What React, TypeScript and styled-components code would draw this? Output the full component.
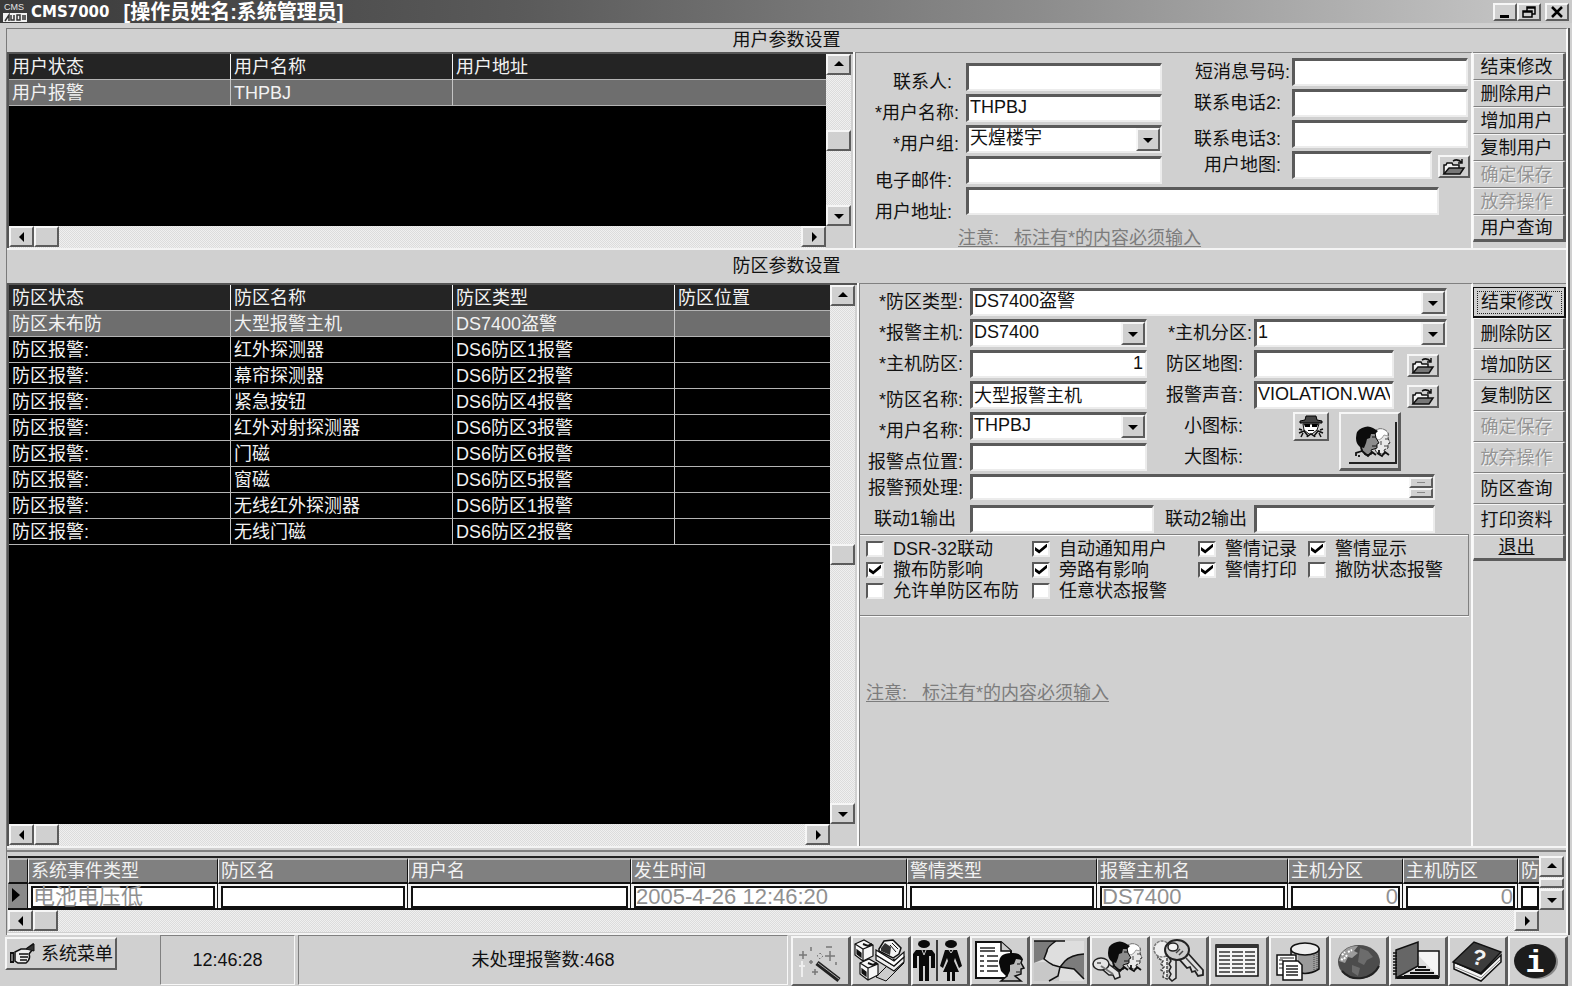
import React from 'react';
import styled, { createGlobalStyle, css } from 'styled-components';

const Global = createGlobalStyle`
  * { box-sizing: border-box; }
  body {
    margin: 0;
    background: #d0d0d0;
    color: #111;
    font: 18px/20px "Liberation Sans", "Noto Sans CJK SC", sans-serif;
  }
  button, input, select, textarea { font: inherit; color: inherit; margin: 0; border-radius: 0; }
`;

const raised = css`
  background: #d0d0d0;
  border: solid;
  border-width: 2px;
  border-color: #f6f6f6 #5c5c5c #5c5c5c #f6f6f6;
`;

const sunken = css`
  background: #fff;
  border: solid;
  border-width: 3px 2px 2px 3px;
  border-color: #5a5a5a #ececec #ececec #5a5a5a;
`;

/* ---------- window frame ---------- */

const Window = styled.div`
  min-height: 100vh;
  display: flex;
  flex-direction: column;
`;

const TitleBar = styled.header`
  height: 23px;
  flex: none;
  display: flex;
  align-items: center;
  padding: 0 3px;
  background: linear-gradient(90deg, #3a3a3a, #5a5a5a 33%, #8c8c8c 66%, #cacaca);
  color: #fff;
`;

const Title = styled.h1`
  flex: 1;
  margin: 0 0 0 4px;
  display: flex;
  align-items: center;
  gap: 14px;
  font: bold 15px/22px "DejaVu Sans", "Noto Sans CJK SC", sans-serif;
  white-space: nowrap;
`;

const Operator = styled.span`
  font-size: 20px;
  font-family: "Liberation Sans", "Noto Sans CJK SC", sans-serif;
`;

const WindowButton = styled.button<{ $apart?: boolean }>`
  ${raised}
  width: 24px;
  height: 18px;
  padding: 0;
  display: flex;
  align-items: center;
  justify-content: center;
  margin-left: ${p => (p.$apart ? 4 : 0)}px;
`;

const Frame = styled.main`
  flex: 1;
  display: flex;
  flex-direction: column;
  margin: 5px 4px 0 6px;
  border: solid #7a7a7a;
  border-width: 1px 0 0 1px;
  border-right: 2px solid #fafafa;
  box-shadow: 2px 0 0 #555;
`;

const Section = styled.section<{ $fill?: boolean }>`
  display: flex;
  flex-direction: column;
  flex: ${p => (p.$fill ? '1 1 auto' : 'none')};
  border-bottom: 2px solid #f4f4f4;
`;

const SectionTitle = styled.h2<{ $tall?: boolean }>`
  margin: 0;
  font-size: 18px;
  font-weight: normal;
  text-align: center;
  line-height: ${p => (p.$tall ? 33 : 23)}px;
`;

const Columns = styled.div<{ $form: number }>`
  flex: 1;
  display: grid;
  grid-template-columns: minmax(0, 1fr) ${p => p.$form}px 93px;
`;

/* ---------- lists with scroll bars ---------- */

const ListPanel = styled.div`
  display: grid;
  grid-template: minmax(0, 1fr) 22px / minmax(0, 1fr) 25px;
  padding-right: 4px;
  border-top: 2px solid #555;
  border-left: 2px solid #555;
`;

const ListBody = styled.div`
  background: #000;
  overflow: hidden;
`;

const ListTable = styled.table`
  width: 100%;
  table-layout: fixed;
  border-collapse: separate;
  border-spacing: 0;
  color: #f2f2f2;
  th, td {
    height: 26px;
    padding: 0 0 0 3px;
    text-align: left;
    font-weight: normal;
    white-space: nowrap;
    line-height: 24px;
    border-bottom: 1px solid #b4b4b4;
    border-right: 1px solid #c4c4c4;
  }
  th { background: #242424; border-right-color: #f4f4f4; }
  th:last-child, td:last-child { border-right: 0; }
`;

const ListRow = styled.tr<{ $selected?: boolean }>`
  background: ${p => (p.$selected ? '#6e6e6e' : '#000')};
`;

const Track = styled.div<{ $vertical?: boolean }>`
  display: flex;
  flex-direction: ${p => (p.$vertical ? 'column' : 'row')};
  background: conic-gradient(#dcdcdc 25%, #f0f0f0 0 50%, #dcdcdc 0 75%, #f0f0f0 0) 0 0 / 2px 2px;
`;

const ScrollButton = styled.button`
  ${raised}
  width: 25px;
  height: 21px;
  padding: 0;
  flex: none;
  display: flex;
  align-items: center;
  justify-content: center;
`;

const Thumb = styled.div<{ $thin?: boolean }>`
  ${raised}
  width: 25px;
  height: ${p => (p.$thin ? 10 : 21)}px;
  flex: none;
`;

const Space = styled.span`
  flex: 1 0 0;
`;

const arrows = {
  up: '1,6 11,6 6,1',
  down: '1,3 11,3 6,8',
  left: '8,0 8,10 3,5',
  right: '4,0 4,10 9,5',
};

const Arrow = ({ dir }: { dir: keyof typeof arrows }) => (
  <svg width="12" height="10" viewBox="0 0 12 10" aria-hidden="true">
    <polygon points={arrows[dir]} fill="#000" />
  </svg>
);

const VScroll = ({ thin }: { thin?: boolean }) => (
  <Track $vertical>
    <ScrollButton aria-label="上"><Arrow dir="up" /></ScrollButton>
    <Space />
    <Thumb $thin={thin} />
    <Space />
    <ScrollButton aria-label="下"><Arrow dir="down" /></ScrollButton>
  </Track>
);

const HScroll = () => (
  <Track>
    <ScrollButton aria-label="左"><Arrow dir="left" /></ScrollButton>
    <Thumb />
    <Space />
    <ScrollButton aria-label="右"><Arrow dir="right" /></ScrollButton>
  </Track>
);

const ListCol = styled.col`
  width: 222px;
  &:last-child { width: auto; }
`;

function List({ heads, rows }: { heads: string[]; rows: string[][] }) {
  return (
    <ListPanel>
      <ListBody>
        <ListTable>
          <colgroup>{heads.map(h => <ListCol key={h} />)}</colgroup>
          <thead><tr>{heads.map(h => <th key={h}>{h}</th>)}</tr></thead>
          <tbody>
            {rows.map((r, i) => (
              <ListRow key={i} $selected={i === 0}>{r.map((c, j) => <td key={j}>{c}</td>)}</ListRow>
            ))}
          </tbody>
        </ListTable>
      </ListBody>
      <VScroll />
      <HScroll />
    </ListPanel>
  );
}

/* ---------- forms ---------- */

const FormPanel = styled.form<{ $top: number }>`
  display: flex;
  flex-direction: column;
  padding-top: ${p => p.$top}px;
  border-top: 1px solid #808080;
  border-left: 1px solid #808080;
  border-right: 2px solid #fafafa;
  box-shadow: -2px 0 0 #fafafa;
`;

const UserColumns = styled.div`
  display: flex;
  align-items: flex-start;
  height: 124px;
`;

const FieldGrid = styled.div<{ $label: number }>`
  display: grid;
  grid-template-columns: ${p => p.$label}px auto;
  row-gap: 3px;
`;

const UserRight = styled(FieldGrid)`
  margin-top: -5px;
`;

const ZoneGrid = styled.div`
  display: grid;
  grid-template-columns: 110px 184px 100px 140px 1fr;
  row-gap: 3px;
  padding-bottom: 1px;
`;

const drops = { none: 0, low: 10, lower: 22 };
const insets = { tight: 2, near: 7, mid: 11, far: 14 };

const Label = styled.label<{ $drop?: keyof typeof drops; $inset?: keyof typeof insets }>`
  height: 28px;
  display: flex;
  align-items: center;
  justify-content: flex-end;
  white-space: nowrap;
  padding-top: ${p => drops[p.$drop ?? 'none']}px;
  padding-right: ${p => insets[p.$inset ?? 'near']}px;
`;

const TextBox = styled.input<{ $w: number; $right?: boolean; $span?: number }>`
  ${sunken}
  width: ${p => p.$w}px;
  height: 28px;
  padding: 0 2px 3px 1px;
  outline: none;
  text-align: ${p => (p.$right ? 'right' : 'left')};
  grid-column: span ${p => p.$span ?? 1};
`;

const ComboFrame = styled.span<{ $w: number; $span?: number }>`
  ${sunken}
  width: ${p => p.$w}px;
  height: 28px;
  display: flex;
  grid-column: span ${p => p.$span ?? 1};
`;

const ComboSelect = styled.select`
  appearance: none;
  flex: 1;
  min-width: 0;
  border: 0;
  background: transparent;
  padding: 0 0 3px 1px;
  outline: none;
`;

const ComboArrow = styled.span`
  ${raised}
  width: 24px;
  display: flex;
  align-items: center;
  justify-content: center;
  pointer-events: none;
`;

const Combo = ({ id, w, value, span }: { id: string; w: number; value: string; span?: number }) => (
  <ComboFrame $w={w} $span={span}>
    <ComboSelect id={id}><option>{value}</option></ComboSelect>
    <ComboArrow><Arrow dir="down" /></ComboArrow>
  </ComboFrame>
);

const BrowseRow = styled.span`
  display: flex;
  gap: 6px;
`;

const BrowseButton = styled.button`
  ${raised}
  width: 32px;
  height: 23px;
  padding: 0;
  margin-top: 4px;
  display: flex;
  align-items: center;
  justify-content: center;
`;

const BrowseCell = styled.span`
  padding-left: 13px;
`;

const IconCell = styled.span`
  grid-column: span 2;
  grid-row: span 2;
  display: flex;
  align-items: flex-start;
  gap: 10px;
  padding-left: 39px;
`;

const SmallIconButton = styled.button`
  ${raised}
  width: 36px;
  height: 29px;
  padding: 0;
`;

const LargeIconButton = styled.button`
  ${raised}
  border-right-width: 3px;
  border-bottom-width: 3px;
  width: 62px;
  height: 59px;
  padding: 0;
`;

const MemoFrame = styled.span`
  ${sunken}
  grid-column: span 4;
  width: 465px;
  height: 26px;
  display: flex;
`;

const Memo = styled.textarea`
  flex: 1;
  border: 0;
  padding: 0;
  resize: none;
  outline: none;
  overflow: hidden;
  background: transparent;
`;

const Spinner = styled.span`
  width: 24px;
  display: grid;
  grid-template-rows: 1fr 1fr;
`;

const SpinButton = styled.button`
  ${raised}
  min-height: 0;
  padding: 0;
  &::before { content: ''; display: block; height: 1px; margin: 0 6px; background: #888; }
`;

const Note = styled.p<{ $user?: boolean }>`
  margin: ${p => (p.$user ? '13px 0 0 102px' : '67px 0 0 6px')};
  color: #7c7c7c;
  text-decoration: underline;
  text-underline-offset: 2px;
  white-space: pre;
`;

const OptionBox = styled.fieldset`
  display: grid;
  grid-template-columns: 166px 166px 110px 1fr;
  grid-auto-rows: 21px;
  height: 82px;
  margin: 0 2px 0 0;
  padding: 3px 0 0 6px;
  min-width: 0;
  border: solid #808080;
  border-width: 1px 1px 1px 0;
  box-shadow: 0 1px 0 #fafafa, inset 0 1px 0 #fafafa;
`;

const CheckLabel = styled.label`
  display: flex;
  align-items: center;
  gap: 9px;
  white-space: nowrap;
`;

const Check = styled.input`
  ${sunken}
  border-width: 2px;
  appearance: none;
  width: 18px;
  height: 16px;
  flex: none;
  &:checked::before {
    content: '';
    display: block;
    width: 12px;
    height: 10px;
    margin: 1px;
    background: #000;
    clip-path: polygon(0 35%, 35% 65%, 100% 0, 100% 35%, 35% 100%, 0 70%);
  }
`;

/* ---------- side buttons ---------- */

const Side = styled.div<{ $top: number }>`
  display: flex;
  flex-direction: column;
  padding-top: ${p => p.$top}px;
  border-top: 1px solid #808080;
`;

const SideButton = styled.button<{ $h: number; $focus?: boolean; $underline?: boolean }>`
  ${raised}
  border-width: 1px 3px 1px 1px;
  border-bottom-color: #808080;
  height: ${p => p.$h}px;
  padding: 0 4px 0 0;
  white-space: nowrap;
  text-decoration: ${p => (p.$underline ? 'underline' : 'none')};
  &:disabled { color: #949494; text-shadow: 1px 1px 0 #f4f4f4; }
  &:last-child { border-bottom: 3px solid #5c5c5c; }
  ${p => p.$focus && css`
    border: 1px solid #111;
    border-width: 1px 2px 2px 1px;
    outline: 1px dotted #222;
    outline-offset: -5px;
  `}
`;

/* ---------- event log ---------- */

const EventPanel = styled.section`
  flex: none;
  display: grid;
  grid-template: auto 22px / minmax(0, 1fr) 25px;
  margin: 2px 0 0;
  padding: 4px 2px 1px 1px;
  border-top: 2px solid #808080;
  border-bottom: 2px solid #f4f4f4;
`;

const EventTable = styled.table`
  width: 100%;
  table-layout: fixed;
  border-collapse: separate;
  border-spacing: 0;
  border-top: 2px solid #222;
  th, td {
    padding: 0;
    text-align: left;
    font-weight: normal;
    white-space: nowrap;
    border-right: 1px solid #111;
    border-bottom: 2px solid #111;
  }
  th {
    height: 26px;
    background: #808080;
    color: #f2f2f2;
    padding-left: 2px;
    border-left: 1px solid #eee;
    border-top: 2px solid #bbb;
    line-height: 20px;
  }
  td { height: 26px; background: #f4f4f4; padding: 1px 2px 0 3px; }
  th:last-child, td:last-child { border-right: 0; padding-right: 0; }
  td:first-child { background: #8a8a8a; }
`;

const EventCell = styled.div<{ $right?: boolean }>`
  height: 22px;
  border: 2px solid #111;
  background: #fff;
  color: #909090;
  font-size: 22px;
  line-height: 18px;
  text-align: ${p => (p.$right ? 'right' : 'left')};
`;

/* ---------- status bar ---------- */

const StatusBar = styled.footer`
  flex: none;
  display: flex;
  align-items: stretch;
  height: 51px;
  padding: 0 4px 0 5px;
`;

const MenuButton = styled.button`
  ${raised}
  width: 112px;
  height: 33px;
  margin: 2px 43px 0 0;
  padding: 0 2px;
  display: flex;
  align-items: center;
  justify-content: space-between;
  white-space: nowrap;
`;

const StatusCell = styled.div<{ $clock?: boolean }>`
  ${p => (p.$clock ? 'width: 135px;' : 'flex: 1;')}
  margin: 0 3px 1px 0;
  display: flex;
  align-items: center;
  justify-content: center;
  border: 1px solid;
  border-color: #808080 #f8f8f8 #f8f8f8 #808080;
`;

const Tools = styled.nav`
  display: grid;
  grid-template-columns: repeat(13, minmax(0, 1fr));
  width: 777px;
  padding-top: 1px;
`;

const ToolButton = styled.button`
  ${raised}
  border-right-width: 3px;
  padding: 0;
  overflow: hidden;
  display: flex;
  align-items: center;
  justify-content: center;
`;

/* ---------- drawings ---------- */

const FolderIcon = () => (
  <svg width="24" height="18" viewBox="0 0 24 18" aria-hidden="true">
    <path d="M2 16V7h2l1-2h5l1 2h6v3" fill="#f4f4f4" stroke="#111" strokeWidth="1.5" />
    <path d="M2 16l5-6h15l-4 6z" fill="#777" stroke="#111" strokeWidth="1.5" />
    <path d="M11 3q5-3 9 2M20 1v4h-4" fill="none" stroke="#111" strokeWidth="1.5" />
  </svg>
);

const SpyIcon = () => (
  <svg width="30" height="24" viewBox="0 0 30 24" aria-hidden="true">
    <path d="M9 6L10 2H20L21 6L26 7V9H4V7Z" fill="#444" stroke="#000" />
    <path d="M7 10H23L21 16L16 20H13L8 16Z" fill="#fff" stroke="#111" />
    <path d="M8 10h6v3H9zM16 10h6l-1 3h-5zM12 16h6v1h-6z" fill="#000" />
    <path d="M3 19l5-2 4 5 3-2 3 2 4-5 5 2M5 23l2-4M25 23l-2-4M11 23l1-2M19 23l-1-2M3 15l3 1M27 15l-3 1" fill="none" stroke="#111" strokeWidth="1.5" />
  </svg>
);

const Faces = () => (
  <>
    <path d="M19 6Q24 1 30 4Q35 7 33 12L35 17L33 18V22L29 24L30 28L22 27Q17 20 19 6Z" fill="#e8e8e8" stroke="#333" strokeDasharray="4 1" />
    <path d="M20 5Q25 1 30 4Q34 6 33 10L29 9L27 12L24 14L20 12Z" fill="#fff" stroke="#888" strokeWidth=".8" />
    <path d="M30 13H33M29 20H33M26 15V19" stroke="#444" />
    <path d="M10 7H20L21 12L24 17L22 18V22L16 24L17 28L10 29L6 22Z" fill="#8c8c8c" stroke="#111" />
    <path d="M1 12Q1 4 7 2Q13 -1 18 2L23 5L20 8H16L15 12L12 13L11 17L9 22L5 21Q1 18 1 12Z" fill="#0c0c0c" />
    <path d="M17 11H21M17 20H22" stroke="#111" strokeWidth="1.2" />
    <path d="M6 21L7 25L1 27V30M7 25L13 30L17 26L21 29M22 27L27 30L30 26L34 29M4 29V31M24 24V28" fill="none" stroke="#111" strokeWidth="1.8" />
  </>
);

const LargeFaceIcon = () => (
  <svg width="56" height="53" viewBox="0 0 56 53" aria-hidden="true">
    <path d="M7 49H54V8" fill="none" stroke="#222" strokeWidth="2" />
    <g transform="translate(13 12)"><Faces /></g>
  </svg>
);

const LogoIcon = () => (
  <svg width="24" height="20" viewBox="0 0 24 20" aria-hidden="true">
    <text x="1" y="8" fontFamily="Liberation Sans" fontSize="9" fill="#e4e4e4">CMS</text>
    <path d="M0 11H24V20H0Z" fill="#f2f2f2" />
    <path d="M2 19l4-6v6M8 13v5h3v-5M14 13v5h3v-5zM20 13v5M22 13v5" fill="none" stroke="#333" strokeWidth="1.5" />
  </svg>
);

const HandIcon = () => (
  <svg width="28" height="22" viewBox="0 0 28 22" aria-hidden="true">
    <path d="M1 9h4v11H1z" fill="#111" />
    <path d="M6 9l6-3h5l7-5v5l-4 5q2 5-3 9H9l-3-2z" fill="#eee" stroke="#111" strokeWidth="1.5" />
    <path d="M17 6l8-5v7z" fill="#333" stroke="#111" />
    <path d="M10 11h9M11 14h8M11 17h7" stroke="#111" strokeWidth="1.5" />
    <path d="M3 11v7" stroke="#ddd" />
  </svg>
);

const Cube = ({ x, y }: { x: number; y: number }) => (
  <g transform={`translate(${x} ${y})`} stroke="#111" strokeWidth="1.2">
    <path d="M1 5L10 1L19 6V17L9 22L1 16Z" fill="#f6f6f6" />
    <path d="M1 5L9 10L19 6M9 10V22" fill="none" />
    <path d="M3 11l4 3v4l-4-3z" fill="#111" />
    <path d="M9 5l5 2 4-2" fill="none" strokeWidth="2" />
  </g>
);

const toolIcons: { name: string; art: React.ReactNode }[] = [
  {
    name: '向导',
    art: (
      <>
        <path d="M27 28L49 45" stroke="#222" strokeWidth="5" />
        <path d="M28 28L49 44" stroke="#aaa" strokeWidth="1" />
        <path d="M13 16v8M9 20h8M40 16v10M35 21h10M21 12v4M36 12h6M25 34v6M22 37h6M46 27v3M19 27h4M21 25v4" stroke="#777" strokeWidth="1.5" />
        <path d="M30 18l3 3-3 3-3-3z" fill="none" stroke="#777" strokeDasharray="2 2" />
        <path d="M12 26v16M9 31h6" stroke="#eee" strokeWidth="2" />
      </>
    ),
  },
  {
    name: '防区',
    art: (
      <>
        <path d="M26 42L36 46L54 28L44 24Z" fill="#ccc" stroke="#111" />
        <path d="M26 20L44 31L54 22V27L44 36L26 25Z" fill="#eee" stroke="#111" strokeWidth="1.2" />
        <path d="M26 15L44 26L54 17V22L44 31L26 20Z" fill="#fff" stroke="#111" strokeWidth="1.2" />
        <path d="M29 14L34 6L43 5L51 13L49 19L43 23L29 16Z" fill="#f4f4f4" stroke="#111" strokeWidth="1.5" />
        <path d="M31 13l4-5 6 4-1 8-9-4z" fill="#333" />
        <path d="M42 8l6 6M40 10l6 7" stroke="#111" />
        <Cube x={4} y={4} />
        <Cube x={9} y={23} />
      </>
    ),
  },
  {
    name: '用户组',
    art: (
      <>
        <g fill="#0a0a0a">
          <ellipse cx="14" cy="9" rx="6" ry="4" />
          <path d="M6 15H22L25 19V33H21V21H19V46H15V31H13V46H9V21H7V33H3V19Z" />
          <ellipse cx="41" cy="9" rx="6" ry="4" />
          <path d="M35 15H47L52 31L49 33L45 23L44 26L49 37H45V46H42V37H40V46H37V37H33L38 26L37 23L33 33L30 31Z" />
        </g>
        <path d="M27 5V46" stroke="#0a0a0a" strokeWidth="1.5" />
        <path d="M12 15l2 5 2-5M39 15l2 3 2-3" fill="none" stroke="#ccc" />
      </>
    ),
  },
  {
    name: '用户资料',
    art: (
      <>
        <path d="M6 7H31L41 16V43H6Z" fill="#fff" stroke="#111" strokeWidth="2" />
        <path d="M31 7V16H41" fill="#ccc" stroke="#111" strokeWidth="1.5" />
        <path d="M10 13H25M10 16H25M10 21H14M17 21H28M10 26H14M17 26H28M10 31H14M17 31H28M10 36H14M17 36H28" stroke="#222" strokeWidth="1.5" />
        <path d="M34 26L47 20L52 25L51 28L54 33L51 34V39L45 41L51 46H31L37 41L35 34Z" fill="#bbb" stroke="#111" strokeWidth="1.5" />
        <path d="M29 28Q29 18 41 18Q51 17 53 25L46 24L44 29L40 30L40 36L37 42L31 36Z" fill="#0a0a0a" />
        <path d="M47 29l3 0M46 37h4" stroke="#111" />
      </>
    ),
  },
  {
    name: '地图',
    art: (
      <>
        <path d="M5 6H55V46H5Z" fill="#dedede" />
        <path d="M5 6H27Q18 12 18 16L15 24L5 28Z" fill="#7c7c7c" />
        <path d="M55 19Q42 20 36 26L31 32L45 34L55 44Z" fill="#7c7c7c" />
        <path d="M5 28Q19 25 24 30L31 33L30 46H5Z" fill="#c8c8c8" />
        <path d="M5 6H36L27 6Q18 12 18 16L15 24Q20 28 24 30L31 32L45 34L55 44M55 19Q42 20 36 26L31 32L29 41L20 46" fill="none" stroke="#111" strokeWidth="1.5" />
      </>
    ),
  },
  {
    name: '用户权限',
    art: (
      <>
        <g transform="translate(18 6)"><Faces /></g>
        <path d="M17 27L30 37L31 42L26 44L24 40L20 40L13 34Z" fill="#e4e4e4" stroke="#222" strokeWidth="1.5" />
        <ellipse cx="12" cy="29" rx="8" ry="6" fill="#e4e4e4" stroke="#222" strokeWidth="1.5" />
        <path d="M8 28h4M12 31l12 8" stroke="#777" strokeWidth="2" />
      </>
    ),
  },
  {
    name: '密码',
    art: (
      <>
        <path d="M9 20H18V44L14 42L15 37L12 35L15 32L12 29L14 26L9 23Z" fill="#eee" stroke="#444" strokeWidth="1.5" strokeDasharray="3 1" />
        <ellipse cx="13" cy="14" rx="8" ry="8" fill="#eee" stroke="#777" strokeWidth="1.5" strokeDasharray="3 1" />
        <path d="M19 20H27V43L23 46L20 43L22 39L20 36L22 32L20 29L22 26Z" fill="#ddd" stroke="#222" strokeWidth="1.5" />
        <path d="M36 15L54 35V40L49 41L46 36L43 37L41 32L38 33L31 25Z" fill="#ddd" stroke="#222" strokeWidth="1.8" />
        <ellipse cx="28" cy="15" rx="12" ry="10" fill="#ccc" stroke="#222" strokeWidth="2" />
        <ellipse cx="24" cy="12" rx="5" ry="4" fill="#f2f2f2" stroke="#222" strokeWidth="1.5" />
        <path d="M27 18l4-4M30 20l4-4M37 23l12 13" stroke="#444" strokeWidth="1.5" />
      </>
    ),
  },
  {
    name: '报表',
    art: (
      <>
        <path d="M7 10H49V41H7Z" fill="#f4f4f4" stroke="#111" strokeWidth="1.5" />
        <path d="M7 9H49V13H7Z" fill="#333" />
        <path d="M10 17H46M10 21H46M10 25H46M10 29H46M10 33H46M10 37H46" stroke="#333" strokeWidth="1.5" />
        <path d="M22 14V40M35 14V40" stroke="#f4f4f4" strokeWidth="2" />
      </>
    ),
  },
  {
    name: '数据库',
    art: (
      <>
        <path d="M22 14V34Q36 43 50 34V14Z" fill="#9a9a9a" stroke="#111" strokeWidth="1.5" />
        <path d="M26 18V36" stroke="#eee" strokeWidth="5" />
        <path d="M45 18V36M48 17V34" stroke="#444" strokeDasharray="1 1" />
        <ellipse cx="36" cy="14" rx="14" ry="6" fill="#eee" stroke="#111" strokeWidth="1.5" />
        <path d="M8 20H27V40H8Z" fill="#fff" stroke="#111" strokeWidth="1.5" />
        <path d="M10 25H14M10 29H14M10 33H14M11 23H25" stroke="#222" />
        <path d="M14 26H29L33 30V45H14Z" fill="#fff" stroke="#111" strokeWidth="1.5" />
        <path d="M17 31H29M17 34H29M17 37H29M17 40H29" stroke="#222" strokeWidth="1.5" />
      </>
    ),
  },
  {
    name: '网络',
    art: (
      <>
        <ellipse cx="31" cy="27" rx="21" ry="17" fill="#4c4c4c" />
        <path d="M13 19Q20 10 30 11L26 16L30 18L24 23L20 22L17 28L11 26Z" fill="#9c9c9c" />
        <path d="M32 13l8 3 5 6-6 3-3 5-6-3 1-7zM24 30l8 3-2 8-6-4z" fill="#6c6c6c" />
        <path d="M14 20l3-3M16 24l3-4M20 17l4-2M13 24l2 1" stroke="#fff" strokeWidth="2" strokeDasharray="2 1" />
        <path d="M14 36q8 9 20 7 12-2 17-12" fill="none" stroke="#222" strokeWidth="2" />
      </>
    ),
  },
  {
    name: '日志',
    art: (
      <>
        <path d="M30 16H51V42H12Z" fill="#f4f4f4" stroke="#111" strokeWidth="1.5" />
        <path d="M30 20L50 41H10L30 33Z" fill="#ddd" />
        <path d="M30 28L22 35M30 32H38M27 35H42M22 38H46M16 41H50" stroke="#111" strokeWidth="2" />
        <path d="M10 41H51V44H8Z" fill="#111" />
        <path d="M8 15L30 7V31L8 43Z" fill="#666" stroke="#111" strokeWidth="1.5" />
        <path d="M5 18h4M5 21h4M5 24h4M5 27h4M5 30h4M5 33h4M5 36h4M5 39h4" stroke="#111" strokeWidth="1.5" />
      </>
    ),
  },
  {
    name: '帮助',
    art: (
      <>
        <path d="M6 27L33 39L53 20V27L33 46L6 34Z" fill="#f6f6f6" stroke="#111" strokeWidth="1.5" />
        <path d="M7 32L33 43L52 25" fill="none" stroke="#888" />
        <path d="M5 27L26 7L53 17L33 38Z" fill="#3c3c3c" stroke="#111" strokeWidth="1.5" />
        <text x="24" y="30" transform="rotate(16 30 24)" fontFamily="Liberation Sans" fontWeight="bold" fontSize="22" fill="#f2f2f2">?</text>
      </>
    ),
  },
  {
    name: '关于',
    art: (
      <>
        <ellipse cx="29" cy="27" rx="21" ry="17" fill="#888" />
        <ellipse cx="27" cy="26" rx="21" ry="17" fill="#1c1c1c" />
        <text x="27" y="37" textAnchor="middle" fontFamily="Liberation Mono" fontWeight="bold" fontSize="32" fill="#fff">i</text>
      </>
    ),
  },
];

/* ---------- data ---------- */

const zoneRows = [
  ['防区未布防', '大型报警主机', 'DS7400盗警', ''],
  ['防区报警:', '红外探测器', 'DS6防区1报警', ''],
  ['防区报警:', '幕帘探测器', 'DS6防区2报警', ''],
  ['防区报警:', '紧急按钮', 'DS6防区4报警', ''],
  ['防区报警:', '红外对射探测器', 'DS6防区3报警', ''],
  ['防区报警:', '门磁', 'DS6防区6报警', ''],
  ['防区报警:', '窗磁', 'DS6防区5报警', ''],
  ['防区报警:', '无线红外探测器', 'DS6防区1报警', ''],
  ['防区报警:', '无线门磁', 'DS6防区2报警', ''],
];

const eventCols: { head: string; value: string; width?: number; right?: boolean }[] = [
  { head: '系统事件类型', value: '电池电压低', width: 190 },
  { head: '防区名', value: '', width: 190 },
  { head: '用户名', value: '', width: 223 },
  { head: '发生时间', value: '2005-4-26 12:46:20', width: 276 },
  { head: '警情类型', value: '', width: 190 },
  { head: '报警主机名', value: 'DS7400', width: 191 },
  { head: '主机分区', value: '0', width: 115, right: true },
  { head: '主机防区', value: '0', width: 115, right: true },
  { head: '防', value: '' },
];

const options = [
  { text: 'DSR-32联动', on: false },
  { text: '自动通知用户', on: true },
  { text: '警情记录', on: true },
  { text: '警情显示', on: true },
  { text: '撤布防影响', on: true },
  { text: '旁路有影响', on: true },
  { text: '警情打印', on: true },
  { text: '撤防状态报警', on: false },
  { text: '允许单防区布防', on: false },
  { text: '任意状态报警', on: false },
];

const userActions = ['结束修改', '删除用户', '增加用户', '复制用户', '确定保存', '放弃操作', '用户查询'];
const zoneActions = ['结束修改', '删除防区', '增加防区', '复制防区', '确定保存', '放弃操作', '防区查询', '打印资料'];
const disabledActions = ['确定保存', '放弃操作'];
const noteText = '注意:   标注有*的内容必须输入';

export default function App() {
  return (
    <>
      <Global />
      <Window>
        <TitleBar>
          <LogoIcon />
          <Title>CMS7000 <Operator>[操作员姓名:系统管理员]</Operator></Title>
          <WindowButton aria-label="最小化">
            <svg width="14" height="12" viewBox="0 0 14 12"><path d="M2 9H11V12H2Z" fill="#000" /></svg>
          </WindowButton>
          <WindowButton aria-label="还原">
            <svg width="14" height="12" viewBox="0 0 14 12"><path d="M5 5V1H13V8H10M5 2H13M1 5H10V11H1ZM1 6H10" fill="none" stroke="#000" strokeWidth="1.5" /></svg>
          </WindowButton>
          <WindowButton aria-label="关闭" $apart>
            <svg width="14" height="12" viewBox="0 0 14 12"><path d="M2 1L12 11M12 1L2 11" stroke="#000" strokeWidth="2.5" /></svg>
          </WindowButton>
        </TitleBar>

        <Frame>
          <Section>
            <SectionTitle>用户参数设置</SectionTitle>
            <Columns $form={618}>
              <List heads={['用户状态', '用户名称', '用户地址']} rows={[['用户报警', 'THPBJ', '']]} />
              <FormPanel $top={10}>
                <UserColumns>
                  <FieldGrid $label={110}>
                    <Label htmlFor="contact" $drop="low" $inset="far">联系人:</Label>
                    <TextBox id="contact" $w={196} />
                    <Label htmlFor="uname" $drop="low">*用户名称:</Label>
                    <TextBox id="uname" $w={196} defaultValue="THPBJ" />
                    <Label htmlFor="ugroup" $drop="low">*用户组:</Label>
                    <Combo id="ugroup" w={196} value="天煌楼宇" />
                    <Label htmlFor="mail" $drop="lower" $inset="far">电子邮件:</Label>
                    <TextBox id="mail" $w={196} />
                  </FieldGrid>
                  <UserRight $label={130}>
                    <Label htmlFor="sms" $inset="tight">短消息号码:</Label>
                    <TextBox id="sms" $w={176} />
                    <Label htmlFor="tel2" $inset="mid">联系电话2:</Label>
                    <TextBox id="tel2" $w={176} />
                    <Label htmlFor="tel3" $drop="low" $inset="mid">联系电话3:</Label>
                    <TextBox id="tel3" $w={176} />
                    <Label htmlFor="umap" $inset="mid">用户地图:</Label>
                    <BrowseRow>
                      <TextBox id="umap" $w={140} />
                      <BrowseButton type="button" aria-label="打开"><FolderIcon /></BrowseButton>
                    </BrowseRow>
                  </UserRight>
                </UserColumns>
                <FieldGrid $label={110}>
                  <Label htmlFor="addr" $drop="lower" $inset="far">用户地址:</Label>
                  <TextBox id="addr" $w={473} />
                </FieldGrid>
                <Note $user>{noteText}</Note>
              </FormPanel>
              <Side $top={0}>
                {userActions.map(a => (
                  <SideButton key={a} $h={27} disabled={disabledActions.includes(a)}>{a}</SideButton>
                ))}
              </Side>
            </Columns>
          </Section>

          <Section $fill>
            <SectionTitle $tall>防区参数设置</SectionTitle>
            <Columns $form={614}>
              <List heads={['防区状态', '防区名称', '防区类型', '防区位置']} rows={zoneRows} />
              <FormPanel $top={4}>
                <ZoneGrid>
                  <Label htmlFor="ztype">*防区类型:</Label>
                  <Combo id="ztype" w={477} value="DS7400盗警" span={4} />

                  <Label htmlFor="host">*报警主机:</Label>
                  <Combo id="host" w={177} value="DS7400" />
                  <Label htmlFor="part" $inset="tight">*主机分区:</Label>
                  <Combo id="part" w={193} value="1" span={2} />

                  <Label htmlFor="hzone">*主机防区:</Label>
                  <TextBox id="hzone" $w={177} $right defaultValue="1" />
                  <Label htmlFor="zmap" $inset="mid">防区地图:</Label>
                  <TextBox id="zmap" $w={140} />
                  <BrowseCell><BrowseButton type="button" aria-label="打开"><FolderIcon /></BrowseButton></BrowseCell>

                  <Label htmlFor="zname" $drop="low">*防区名称:</Label>
                  <TextBox id="zname" $w={177} defaultValue="大型报警主机" />
                  <Label htmlFor="sound" $inset="mid">报警声音:</Label>
                  <TextBox id="sound" $w={140} defaultValue="VIOLATION.WAV" />
                  <BrowseCell><BrowseButton type="button" aria-label="打开"><FolderIcon /></BrowseButton></BrowseCell>

                  <Label htmlFor="zuser" $drop="low">*用户名称:</Label>
                  <Combo id="zuser" w={177} value="THPBJ" />
                  <Label htmlFor="smallicon" $inset="mid">小图标:</Label>
                  <IconCell>
                    <SmallIconButton type="button" id="smallicon"><SpyIcon /></SmallIconButton>
                    <LargeIconButton type="button" id="largeicon"><LargeFaceIcon /></LargeIconButton>
                  </IconCell>

                  <Label htmlFor="pos" $drop="low">报警点位置:</Label>
                  <TextBox id="pos" $w={177} />
                  <Label htmlFor="largeicon" $inset="mid">大图标:</Label>

                  <Label htmlFor="pre">报警预处理:</Label>
                  <MemoFrame>
                    <Memo id="pre" rows={1} />
                    <Spinner>
                      <SpinButton type="button" aria-label="上一行" />
                      <SpinButton type="button" aria-label="下一行" />
                    </Spinner>
                  </MemoFrame>

                  <Label htmlFor="out1" $inset="far">联动1输出</Label>
                  <TextBox id="out1" $w={184} />
                  <Label htmlFor="out2">联动2输出</Label>
                  <TextBox id="out2" $w={181} $span={2} />
                </ZoneGrid>
                <OptionBox>
                  {options.map(o => (
                    <CheckLabel key={o.text}>
                      <Check type="checkbox" defaultChecked={o.on} />
                      {o.text}
                    </CheckLabel>
                  ))}
                </OptionBox>
                <Note>{noteText}</Note>
              </FormPanel>
              <Side $top={3}>
                {zoneActions.map((a, i) => (
                  <SideButton key={a} $h={31} $focus={i === 0} disabled={disabledActions.includes(a)}>{a}</SideButton>
                ))}
                <SideButton $h={26} $underline>退出</SideButton>
              </Side>
            </Columns>
          </Section>

          <EventPanel>
            <EventTable>
              <colgroup>
                <col style={{ width: 20 }} />
                {eventCols.map(c => <col key={c.head} style={{ width: c.width }} />)}
              </colgroup>
              <thead>
                <tr>
                  <th />
                  {eventCols.map(c => <th key={c.head}>{c.head}</th>)}
                </tr>
              </thead>
              <tbody>
                <tr>
                  <td><svg width="10" height="18" viewBox="0 0 10 18"><path d="M1 2L9 9L1 16Z" fill="#000" /></svg></td>
                  {eventCols.map(c => <td key={c.head}><EventCell $right={c.right}>{c.value}</EventCell></td>)}
                </tr>
              </tbody>
            </EventTable>
            <VScroll thin />
            <HScroll />
          </EventPanel>
        </Frame>

        <StatusBar>
          <MenuButton><HandIcon />系统菜单</MenuButton>
          <StatusCell $clock>12:46:28</StatusCell>
          <StatusCell>未处理报警数:468</StatusCell>
          <Tools>
            {toolIcons.map(t => (
              <ToolButton key={t.name} aria-label={t.name}>
                <svg width="54" height="46" viewBox="3 3 54 46" aria-hidden="true">{t.art}</svg>
              </ToolButton>
            ))}
          </Tools>
        </StatusBar>
      </Window>
    </>
  );
}
